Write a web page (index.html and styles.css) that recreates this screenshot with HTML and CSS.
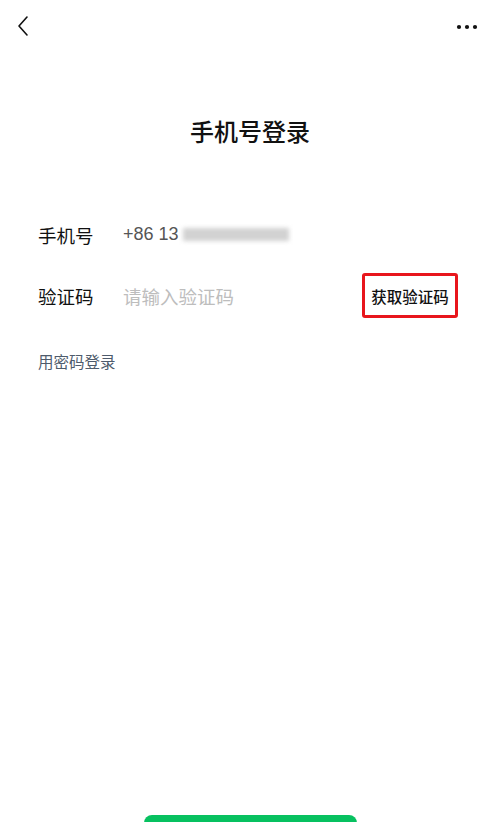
FILE: index.html
```html
<!DOCTYPE html>
<html lang="zh-CN">
<head>
    <meta charset="UTF-8">
    <meta name="viewport" content="width=device-width, initial-scale=1.0">
    <title>手机号登录</title>
    <link rel="stylesheet" href="styles.css">
</head>
<body>
    <div class="nav">
        <svg class="back" width="14" height="24" viewBox="0 0 14 24">
            <path d="M11 3 L3 12 L11 21" fill="none" stroke="#111" stroke-width="1.6" stroke-linecap="round" stroke-linejoin="round"/>
        </svg>
        <svg class="more" width="22" height="6" viewBox="0 0 22 6">
            <circle cx="3" cy="3" r="2.1" fill="#111"/>
            <circle cx="11" cy="3" r="2.1" fill="#111"/>
            <circle cx="19" cy="3" r="2.1" fill="#111"/>
        </svg>
    </div>

    <h1 class="title">手机号登录</h1>

    <div class="form">
        <div class="row">
            <span class="label">手机号</span>
            <span class="value">+86 13<span class="blur"></span></span>
        </div>
        <div class="row">
            <span class="label">验证码</span>
            <span class="placeholder">请输入验证码</span>
            <span class="get-code">获取验证码</span>
        </div>
        <a class="switch" href="#">用密码登录</a>
    </div>

    <div class="submit-wrap">
        <button class="submit" aria-label="登录"></button>
    </div>
</body>
</html>
```

FILE: styles.css
```css
html {
    overflow: hidden;
}

body {
    margin: 0;
    background: #fff;
    font-family: "Noto Sans CJK SC", "Noto Sans", sans-serif;
    color: #111;
}

.nav {
    height: 52px;
    padding: 0 22px 0 16px;
    display: flex;
    justify-content: space-between;
    align-items: center;
}

.back {
    margin-top: -1px;
}

.more {
    margin-top: 2px;
}

.title {
    margin: 63px 0 0;
    font-size: 24px;
    font-weight: 500;
    line-height: 32px;
    text-align: center;
}

.form {
    margin-top: 57px;
    padding: 0 42px 0 38px;
}

.row {
    height: 61px;
    display: flex;
    align-items: center;
}

.label {
    width: 85px;
    font-size: 18.5px;
}

.value {
    font-family: "Liberation Sans", "Noto Sans CJK SC", sans-serif;
    font-size: 18px;
    color: #555;
    display: flex;
    align-items: center;
}

.blur {
    display: inline-block;
    width: 106px;
    height: 13px;
    margin-left: 4px;
    background: #d2d2d2;
    filter: blur(2px);
}

.placeholder {
    font-size: 18.5px;
    color: #bdbdbd;
}

.get-code {
    margin-left: auto;
    width: 90px;
    height: 39px;
    border: 3px solid #e8161c;
    border-radius: 3px;
    display: flex;
    justify-content: center;
    align-items: center;
    font-size: 15.5px;
    font-weight: 500;
    color: #111;
}

.switch {
    display: block;
    margin-top: 24px;
    font-size: 15.5px;
    line-height: 22px;
    color: #4e5b6c;
    text-decoration: none;
}

.submit-wrap {
    margin-top: 443px;
    display: flex;
    justify-content: center;
}

.submit {
    width: 213px;
    height: 46px;
    margin-left: 1px;
    border: none;
    border-radius: 8px;
    background: #07c160;
}
```
